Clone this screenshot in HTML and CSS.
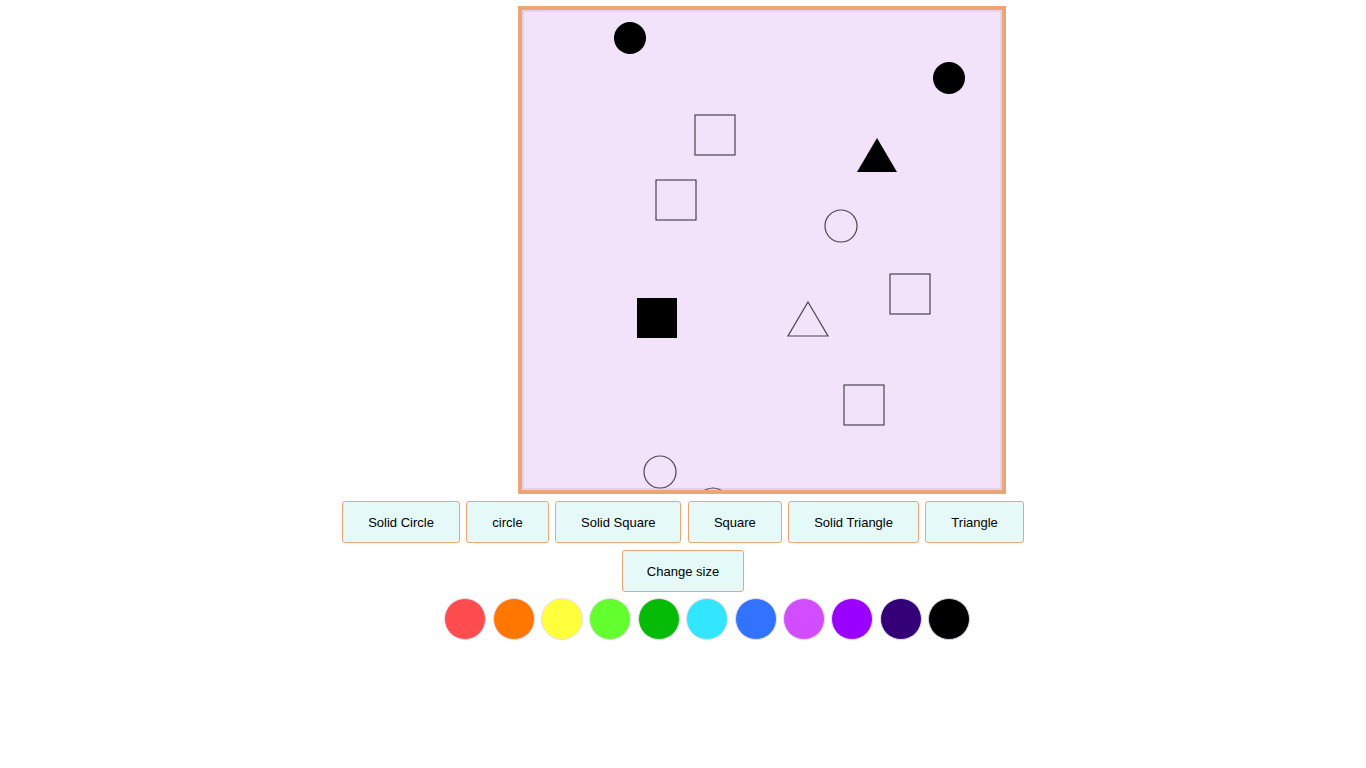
FILE: index.html
```html
<!DOCTYPE html>
<html lang="en">
<head>
<meta charset="utf-8">
<title>Shapes</title>
<link rel="stylesheet" href="styles.css">
</head>
<body>
<main class="app">
  <div class="canvas-row">
    <div class="canvas">
      <svg class="board" viewBox="522 10 480 480" width="480" height="480">
        <g class="solid">
          <circle cx="630" cy="38" r="16"/>
          <circle cx="949" cy="78" r="16"/>
          <polygon points="877,138 897,172 857,172"/>
          <rect x="637" y="298" width="40" height="40"/>
        </g>
        <g class="outline">
          <rect x="695" y="115" width="40" height="40"/>
          <rect x="656" y="180" width="40" height="40"/>
          <circle cx="841" cy="226" r="16"/>
          <rect x="890" y="274" width="40" height="40"/>
          <polygon points="808,302 828,336 788,336"/>
          <rect x="844" y="385" width="40" height="40"/>
          <circle cx="660" cy="472" r="16"/>
          <circle cx="713" cy="504" r="16"/>
        </g>
      </svg>
    </div>
  </div>
  <div class="btn-row">
    <button class="btn">Solid Circle</button>
    <button class="btn">circle</button>
    <button class="btn">Solid Square</button>
    <button class="btn">Square</button>
    <button class="btn">Solid Triangle</button>
    <button class="btn">Triangle</button>
  </div>
  <div class="btn-row">
    <button class="btn btn-size">Change size</button>
  </div>
  <div class="swatches">
    <span class="swatch c-white"></span>
    <span class="swatch c-red"></span>
    <span class="swatch c-orange"></span>
    <span class="swatch c-yellow"></span>
    <span class="swatch c-lime"></span>
    <span class="swatch c-green"></span>
    <span class="swatch c-cyan"></span>
    <span class="swatch c-blue"></span>
    <span class="swatch c-pink"></span>
    <span class="swatch c-purple"></span>
    <span class="swatch c-indigo"></span>
    <span class="swatch c-black"></span>
  </div>
</main>
</body>
</html>
```

FILE: styles.css
```css
* { box-sizing: border-box; }
html, body { margin: 0; padding: 0; background: #ffffff; }
body {
  font-family: "Liberation Sans", Arial, sans-serif;
  font-size: 13px;
  color: #000;
}
.app {
  padding-top: 6px;
  display: flex;
  flex-direction: column;
}
.canvas-row {
  display: flex;
  padding-left: 518px;
}
.canvas {
  width: 488px;
  height: 488px;
  border: 4px solid #eca676;
  background: #f3e3fa;
  box-shadow: inset 0 0 0 2px #e3d2ee;
  overflow: hidden;
}
.board { display: block; }
.solid { fill: #000; }
.outline { fill: none; stroke: #4b4450; stroke-width: 1.2; }

.btn-row {
  display: flex;
  justify-content: center;
  gap: 6.4px;
  margin-top: 7px;
}
.btn {
  font-family: "Liberation Sans", Arial, sans-serif;
  font-size: 13px;
  color: #000;
  height: 42px;
  padding: 0 25px;
  background: #e5faf8;
  border: 1px solid #eca676;
  border-radius: 3px;
}
.btn-size { padding: 0 24px; }
.swatches {
  display: flex;
  justify-content: center;
  gap: 6.4px;
  margin-top: 6px;
}
.swatch {
  width: 42px;
  height: 42px;
  border-radius: 50%;
  border: 1px solid #eadcec;
}
.c-white { background: #fff; border-color: #fff; }
.c-red { background: #ff4d4f; }
.c-orange { background: #ff7700; }
.c-yellow { background: #ffff3c; }
.c-lime { background: #63ff2e; }
.c-green { background: #06bb06; }
.c-cyan { background: #33e6ff; }
.c-blue { background: #3173ff; }
.c-pink { background: #d24dff; }
.c-purple { background: #9a00ff; }
.c-indigo { background: #330077; }
.c-black { background: #000; border-color: #d8d0dc; }
```
